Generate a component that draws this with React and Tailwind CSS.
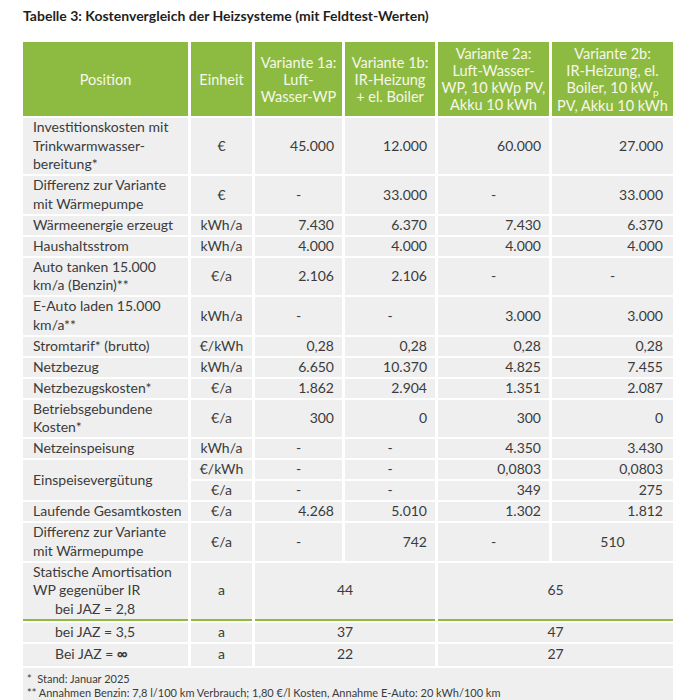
const font = { fontFamily: "Lato, 'Open Sans', sans-serif" };

const pos = "pl-[10px] pr-0 py-[0.25px] text-left align-middle";
const unit = "text-center py-[0.25px] align-middle";
const num = "text-right pr-2 py-[0.25px] align-middle";
const last = "text-right pr-[10px] py-[0.25px] align-middle";
const mid = "text-center py-[0.25px] align-middle";
const green = " border-b-2 border-[#8dbb42]";

function Row({ label, u, vals }) {
  return (
    <tr className="bg-[#efefef]">
      <td className={pos}>{label}</td>
      <td className={unit}>{u}</td>
      {vals.map((v, i) => (
        <td key={i} className={v === "-" ? mid : i === 3 ? last : num}>
          {v}
        </td>
      ))}
    </tr>
  );
}

export default function App() {
  return (
    <div className="w-[700px] h-[700px] bg-white text-[#3b3b3b]" style={font}>
      <h1 className="pl-[23px] pt-[6px] text-[14px] leading-[20px] font-bold text-[#1f1f1f]">
        Tabelle 3: Kostenvergleich der Heizsysteme (mit Feldtest-Werten)
      </h1>
      <table className="ml-[20px] mt-[14px] table-fixed border-separate border-spacing-x-[3px] border-spacing-y-[2px] text-[14px] leading-[18.5px]">
        <colgroup>
          <col className="w-[165px]" />
          <col className="w-[61px]" />
          <col className="w-[87px]" />
          <col className="w-[90px]" />
          <col className="w-[111px]" />
          <col className="w-[121px]" />
        </colgroup>
        <thead>
          <tr className="bg-[#8dbb42] text-[#f7f7ea] text-[14.5px] leading-[17px]">
            <th className="h-[74px] font-normal text-center">Position</th>
            <th className="font-normal text-center">Einheit</th>
            <th className="font-normal text-center">
              Variante 1a:
              <br />
              Luft-
              <br />
              Wasser-WP
            </th>
            <th className="font-normal text-center">
              Variante 1b:
              <br />
              IR-Heizung
              <br />+ el. Boiler
            </th>
            <th className="font-normal text-center">
              Variante 2a:
              <br />
              Luft-Wasser-
              <br />
              WP, 10 kWp PV,
              <br />
              Akku 10 kWh
            </th>
            <th className="font-normal text-center">
              Variante 2b:
              <br />
              IR-Heizung, el.
              <br />
              Boiler, 10 kW<span className="text-[10px] leading-none align-[-3px]">p</span>
              <br />
              PV, Akku 10 kWh
            </th>
          </tr>
        </thead>
        <tbody>
          <Row
            label={
              <>
                Investitionskosten mit
                <br />
                Trinkwarmwasser-
                <br />
                bereitung*
              </>
            }
            u="€"
            vals={["45.000", "12.000", "60.000", "27.000"]}
          />
          <Row
            label={
              <>
                Differenz zur Variante
                <br />
                mit Wärmepumpe
              </>
            }
            u="€"
            vals={["-", "33.000", "-", "33.000"]}
          />
          <Row label="Wärmeenergie erzeugt" u="kWh/a" vals={["7.430", "6.370", "7.430", "6.370"]} />
          <Row label="Haushaltsstrom" u="kWh/a" vals={["4.000", "4.000", "4.000", "4.000"]} />
          <Row
            label={
              <>
                Auto tanken 15.000
                <br />
                km/a (Benzin)**
              </>
            }
            u="€/a"
            vals={["2.106", "2.106", "-", "-"]}
          />
          <Row
            label={
              <>
                E-Auto laden 15.000
                <br />
                km/a**
              </>
            }
            u="kWh/a"
            vals={["-", "-", "3.000", "3.000"]}
          />
          <Row label="Stromtarif* (brutto)" u="€/kWh" vals={["0,28", "0,28", "0,28", "0,28"]} />
          <Row label="Netzbezug" u="kWh/a" vals={["6.650", "10.370", "4.825", "7.455"]} />
          <Row label="Netzbezugskosten*" u="€/a" vals={["1.862", "2.904", "1.351", "2.087"]} />
          <Row
            label={
              <>
                Betriebsgebundene
                <br />
                Kosten*
              </>
            }
            u="€/a"
            vals={["300", "0", "300", "0"]}
          />
          <Row label="Netzeinspeisung" u="kWh/a" vals={["-", "-", "4.350", "3.430"]} />
          <tr className="bg-[#efefef]">
            <td rowSpan={2} className={pos}>
              Einspeisevergütung
            </td>
            <td className={unit}>€/kWh</td>
            <td className={mid}>-</td>
            <td className={mid}>-</td>
            <td className={num}>0,0803</td>
            <td className={last}>0,0803</td>
          </tr>
          <tr className="bg-[#efefef]">
            <td className={unit}>€/a</td>
            <td className={mid}>-</td>
            <td className={mid}>-</td>
            <td className={num}>349</td>
            <td className={last}>275</td>
          </tr>
          <Row label="Laufende Gesamtkosten" u="€/a" vals={["4.268", "5.010", "1.302", "1.812"]} />
          <tr className="bg-[#efefef]">
            <td className={pos}>
              Differenz zur Variante
              <br />
              mit Wärmepumpe
            </td>
            <td className={unit}>€/a</td>
            <td className={mid}>-</td>
            <td className={num}>742</td>
            <td className={mid}>-</td>
            <td className={mid}>510</td>
          </tr>
          <tr className="bg-[#efefef]">
            <td className={pos + green}>
              Statische Amortisation
              <br />
              WP gegenüber IR
              <br />
              <span className="pl-[22px]">bei JAZ = 2,8</span>
            </td>
            <td className={unit + green}>a</td>
            <td colSpan={2} className={mid + green}>
              44
            </td>
            <td colSpan={2} className={mid + green}>
              65
            </td>
          </tr>
          <tr className="bg-[#efefef]">
            <td className={pos}>
              <span className="pl-[22px]">bei JAZ = 3,5</span>
            </td>
            <td className={unit}>a</td>
            <td colSpan={2} className={mid}>
              37
            </td>
            <td colSpan={2} className={mid}>
              47
            </td>
          </tr>
          <tr className="bg-[#efefef]">
            <td className={pos + " h-[22px]"}>
              <span className="pl-[22px]">
                Bei JAZ = <span className="font-bold text-[15px] leading-none">∞</span>
              </span>
            </td>
            <td className={unit}>a</td>
            <td colSpan={2} className={mid}>
              22
            </td>
            <td colSpan={2} className={mid}>
              27
            </td>
          </tr>
          <tr className="bg-[#efefef]">
            <td colSpan={6} className="pl-[4px] pt-[4px] pb-[1px] text-[11px] leading-[14px]">
              *&nbsp; Stand: Januar 2025
              <br />
              ** Annahmen Benzin: 7,8 l/100 km Verbrauch; 1,80 €/l Kosten, Annahme E-Auto: 20 kWh/100 km
            </td>
          </tr>
        </tbody>
      </table>
    </div>
  );
}
